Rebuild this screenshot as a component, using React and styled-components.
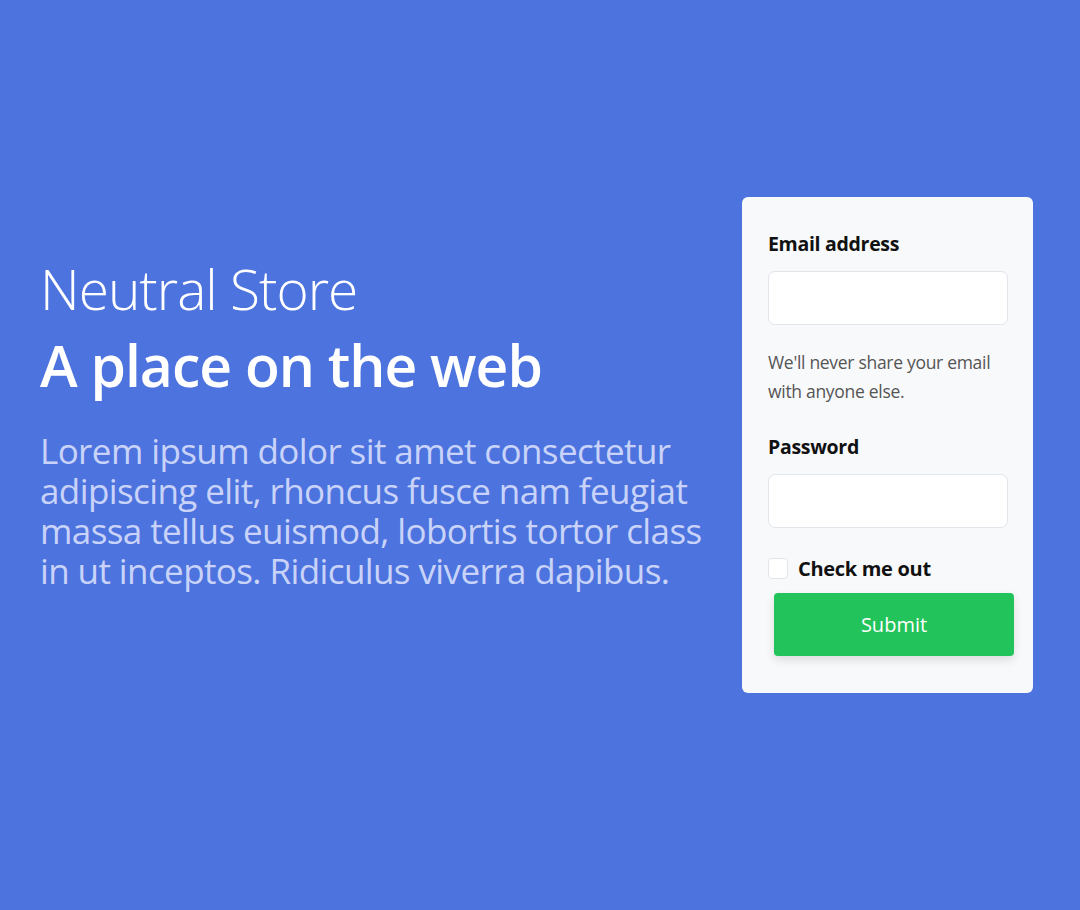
import React from 'react'
import styled, {createGlobalStyle} from 'styled-components'

const GlobalStyle = createGlobalStyle`
  * { box-sizing: border-box; }
  body {
    margin: 0;
    font-family: "Open Sans", "Noto Sans", sans-serif;
    background: #4d73de;
  }
`

const App = () => {
    return (
        <Page>
            <GlobalStyle />
            <Hero>
                <Brand>Neutral Store</Brand>
                <Tagline>A place on the web</Tagline>
                <Intro>
                    Lorem ipsum dolor sit amet consectetur adipiscing elit, rhoncus fusce nam feugiat
                    massa tellus euismod, lobortis tortor class in ut inceptos. Ridiculus viverra dapibus.
                </Intro>
            </Hero>
            <Card>
                <Field>
                    <Label htmlFor="email">Email address</Label>
                    <Input id="email" type="email" />
                    <Help>We'll never share your email with anyone else.</Help>
                </Field>
                <Field>
                    <Label htmlFor="password">Password</Label>
                    <Input id="password" type="password" />
                </Field>
                <CheckRow>
                    <Check type="checkbox" id="check" />
                    <CheckLabel htmlFor="check">Check me out</CheckLabel>
                </CheckRow>
                <Submit type="submit">Submit</Submit>
            </Card>
        </Page>
    )
}

export default App

const Page = styled.div`
    min-height: 910px;
    display: flex;
    align-items: center;
    justify-content: space-between;
    padding: 0 47px 20px 40px;
`
const Hero = styled.div`
    width: 694px;
    margin-bottom: 50px;
    color: #fff;
`
const Brand = styled.h1`
    margin: 0;
    font-size: 55px;
    font-weight: 300;
    line-height: 80px;
    letter-spacing: -1px;
`
const Tagline = styled.h2`
    margin: 0 0 30px;
    font-size: 57px;
    font-weight: 600;
    line-height: 72px;
    letter-spacing: -1px;
`
const Intro = styled.p`
    margin: 0;
    font-size: 35px;
    line-height: 40px;
    color: #c9d3f9;
    letter-spacing: -0.6px;
`
const Card = styled.form`
    width: 291px;
    background: #f8f9fb;
    border-radius: 6px;
    padding: 34px 20px 37px 26px;
    display: flex;
    flex-direction: column;
`
const Field = styled.div`
    display: flex;
    flex-direction: column;
    margin-bottom: 28px;
`
const Label = styled.label`
    font-size: 19.5px;
    font-weight: 700;
    color: #111;
    line-height: 26px;
    margin-bottom: 14px;
    letter-spacing: -0.3px;
`
const Input = styled.input`
    width: 240px;
    height: 54px;
    background: #fff;
    border: 1px solid #e2e5ea;
    border-radius: 7px;
    outline: none;
`
const Help = styled.p`
    margin: 23px 0 0;
    font-size: 17.5px;
    line-height: 29px;
    color: #555;
    letter-spacing: -0.3px;
`
const CheckRow = styled.div`
    display: flex;
    align-items: center;
    gap: 10px;
    margin-top: -1px;
`
const Check = styled.input`
    appearance: none;
    margin: 0;
    width: 20px;
    height: 21px;
    background: #fff;
    border: 1px solid #e2e5ea;
    border-radius: 4px;
`
const CheckLabel = styled.label`
    font-size: 20px;
    font-weight: 700;
    color: #111;
    letter-spacing: -0.3px;
`
const Submit = styled.button`
    margin: 11px 0 0 6px;
    width: 240px;
    height: 63px;
    border: none;
    border-radius: 4px;
    background: #22c35a;
    color: #fff;
    font-family: inherit;
    font-size: 20px;
    box-shadow: 0 4px 10px rgba(0, 0, 0, 0.12);
`
